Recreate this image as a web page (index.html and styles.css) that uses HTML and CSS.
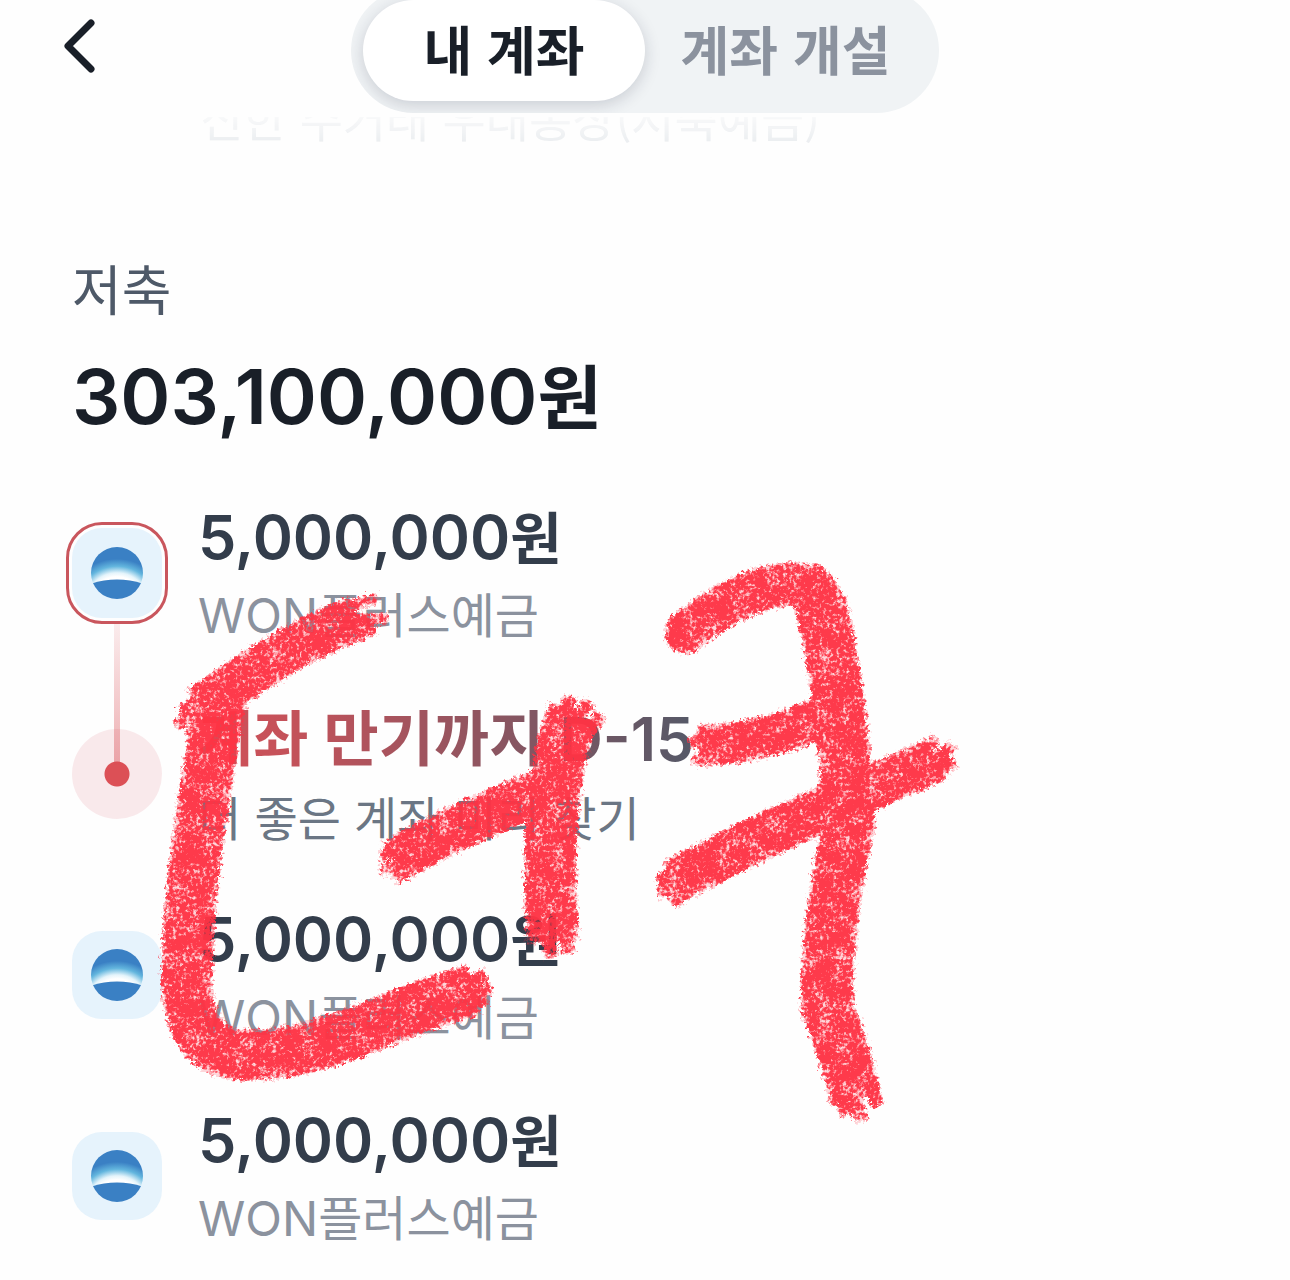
FILE: index.html
```html
<!DOCTYPE html>
<html lang="ko">
<head>
<meta charset="utf-8">
<meta name="viewport" content="width=device-width, initial-scale=1">
<title>내 계좌</title>
<link rel="stylesheet" href="styles.css">
</head>
<body>
<svg class="defs" width="0" height="0" aria-hidden="true">
  <defs>
    <radialGradient id="glow" gradientUnits="userSpaceOnUse" cx="27" cy="50" r="46" gradientTransform="translate(27 50) scale(1 .84) translate(-27 -50)">
      <stop offset=".5" stop-color="#fff"/>
      <stop offset=".6" stop-color="#e4f4fb"/>
      <stop offset=".77" stop-color="#63b6de"/>
      <stop offset=".96" stop-color="#3a80c4"/>
    </radialGradient>
    <clipPath id="disc"><circle cx="27" cy="27" r="26"/></clipPath>
    <symbol id="bank" viewBox="0 0 54 54">
      <g clip-path="url(#disc)">
        <rect width="54" height="54" fill="url(#glow)"/>
        <path d="M0 38Q27 29 54 38V54H0Z" fill="#3a80c4"/>
      </g>
    </symbol>
  </defs>
</svg>

<header class="topbar">
  <button class="back" type="button" aria-label="뒤로">
    <svg width="32" height="54" viewBox="0 0 32 54"><path d="M27 4L4 27L27 50" fill="none" stroke="#191f28" stroke-width="7" stroke-linecap="round" stroke-linejoin="round"/></svg>
  </button>
  <nav class="tabs">
    <button class="tab active" type="button">내 계좌</button>
    <button class="tab" type="button">계좌 개설</button>
  </nav>
</header>

<main class="page">
  <p class="passed">신한 주거래 우대통장(저축예금)</p>
  <h1 class="label">저축</h1>
  <p class="total">303,100,000<span class="won">원</span></p>
  <ul class="accounts">
    <li class="row linked">
      <span class="avatar ring"><svg width="54" height="54"><use href="#bank"/></svg></span>
      <div><p class="amount">5,000,000<span class="won">원</span></p><p class="name">WON플러스예금</p></div>
    </li>
    <li class="row">
      <span class="marker"></span>
      <div><p class="due"><span class="due-text">계좌 만기까지 D-15</span></p><p class="hint">더 좋은 계좌 미리 찾기</p></div>
    </li>
    <li class="row">
      <span class="avatar"><svg width="54" height="54"><use href="#bank"/></svg></span>
      <div><p class="amount">5,000,000<span class="won">원</span></p><p class="name">WON플러스예금</p></div>
    </li>
    <li class="row">
      <span class="avatar"><svg width="54" height="54"><use href="#bank"/></svg></span>
      <div><p class="amount">5,000,000<span class="won">원</span></p><p class="name">WON플러스예금</p></div>
    </li>
  </ul>
</main>

<svg class="crayon" width="1000" height="1180" viewBox="0 0 1000 1180" aria-hidden="true">
  <defs>
    <filter id="wax" filterUnits="userSpaceOnUse" x="0" y="500" width="1000" height="680" color-interpolation-filters="sRGB">
      <feTurbulence type="fractalNoise" baseFrequency=".3" numOctaves="3" seed="7" result="fine"/>
      <feTurbulence type="fractalNoise" baseFrequency=".06" numOctaves="2" seed="3" result="coarse"/>
      <feComposite in="fine" in2="coarse" operator="arithmetic" k1="0" k2=".62" k3=".38" k4="0" result="grain"/>
      <feDisplacementMap in="SourceGraphic" in2="fine" scale="12" xChannelSelector="R" yChannelSelector="G" result="rough"/>
      <feGaussianBlur stdDeviation="3" result="soft"/>
      <feComposite in="soft" in2="grain" operator="arithmetic" k1="0" k2="1.6" k3="5.5" k4="-3.2" result="mask"/>
      <feFlood flood-color="#ff3344"/>
      <feComposite in2="mask" operator="in" result="wax"/>
      <feFlood flood-color="#ff3344" flood-opacity=".2"/>
      <feComposite in2="rough" operator="in" result="tint"/>
      <feComposite in="wax" in2="rough" operator="in" result="strokes"/>
      <feMerge><feMergeNode in="tint"/><feMergeNode in="strokes"/></feMerge>
    </filter>
  </defs>
  <g filter="url(#wax)" opacity=".96" fill="none" stroke="#ff3344" stroke-linejoin="round">
    <path stroke-width="46" d="M358 618C310 634 244 676 200 708"/>
    <path stroke-width="12" d="M350 606L378 598M350 620L388 618M345 632L376 630M212 688L180 712M214 704L176 726M216 712L188 736"/>
    <path stroke-width="52" d="M222 694C206 780 187 890 187 980C189 1037 210 1056 252 1055C330 1053 390 1012 474 990"/>
    <path stroke-width="13" d="M464 984L486 974M470 994L492 988M470 1004L488 998"/>
    <path stroke-width="46" d="M394 862C440 832 500 810 560 782"/>
    <path stroke-width="12" d="M402 850L380 856M402 862L380 872M408 870L394 880"/>
    <path stroke-width="53" d="M574 712C550 770 547 860 553 942"/>
    <path stroke-width="14" d="M565 715L570 696M578 716L590 702M590 730L602 714M546 930L552 958M566 930L568 954"/>
    <path stroke-width="44" stroke-linecap="round" d="M686 632C720 604 765 580 806 585Q818 586 822 606"/>
    <path stroke-width="53" d="M820 600C834 660 845 740 849 824C836 880 826 940 827 1008Q842 1040 856 1100"/>
    <path stroke-width="14" d="M838 1080L846 1116M852 1090L862 1122M868 1080L878 1106"/>
    <path stroke-width="42" d="M698 746Q765 744 836 712"/>
    <path stroke-width="12" d="M702 738L690 744M704 756L692 762"/>
    <path stroke-width="46" d="M674 882C750 840 840 800 938 759"/>
    <path stroke-width="13" d="M678 870L658 882M680 884L658 894M686 892L672 904M922 754L936 738M934 762L954 744M936 772L956 762"/>
  </g>
</svg>
</body>
</html>
```
FILE: styles.css
```css
* { box-sizing: border-box; }

body {
  position: relative;
  margin: 0;
  background: #fefefe;
  color: #191f28;
  font-family: Inter, "Noto Sans CJK KR", sans-serif;
  overflow-x: hidden;
}

p, h1, ul { margin: 0; padding: 0; }

button {
  border: 0;
  padding: 0;
  background: none;
  font: inherit;
  color: inherit;
}

.defs { position: absolute; }

.topbar {
  position: relative;
  z-index: 1;
  display: grid;
  grid-template-columns: 1fr auto 1fr;
  align-items: center;
  height: 130px;
  margin-top: -13px;
  padding: 0 64px 4px;
  background: #fefefe;
}

.back { display: flex; justify-self: start; margin-bottom: 8px; }

.tabs {
  display: flex;
  align-items: center;
  height: 125px;
  padding: 0 12px;
  border-radius: 63px;
  background: #f0f3f5;
  overflow: hidden;
}

.tab {
  height: 101px;
  padding: 0 36px 4px;
  border-radius: 51px;
  color: #8b929e;
  font-family: "Noto Sans CJK KR", sans-serif;
  font-size: 53px;
  font-weight: 600;
  line-height: 96px;
  white-space: nowrap;
}

.tab.active {
  padding: 0 60px 4px;
  background: #fff;
  color: #191f28;
  box-shadow: 0 4px 16px rgba(30, 35, 60, 0.18);
}

.page { padding: 0 72px; }

.passed {
  height: 66px;
  margin-top: -35px;
  padding-left: 128px;
  color: #e8ebee;
  font-family: "Noto Sans CJK KR", sans-serif;
  font-size: 47px;
  line-height: 70px;
  white-space: nowrap;
  -webkit-mask-image: linear-gradient(rgba(0, 0, 0, 0.2) 50%, #000);
  mask-image: linear-gradient(rgba(0, 0, 0, 0.2) 50%, #000);
}

.label {
  margin-top: 104px;
  color: #4e5968;
  font-size: 54px;
  font-weight: 400;
  line-height: 80px;
}

.total {
  margin-top: 4px;
  font-size: 76px;
  font-weight: 600;
  line-height: 120px;
}

.total .won { font-size: 70px; }

.accounts { margin-top: 13px; list-style: none; }

.row {
  position: relative;
  display: grid;
  grid-template-columns: 90px 1fr;
  column-gap: 36px;
  align-items: center;
  height: 201px;
}

.avatar {
  display: grid;
  place-items: center;
  height: 88px;
  border-radius: 30px;
  background: #e6f3fc;
}

.ring {
  height: 90px;
  outline: 3px solid #c9565d;
  outline-offset: 3px;
}

.linked::after {
  content: "";
  position: absolute;
  top: 151px;
  left: 42px;
  z-index: 1;
  width: 6px;
  height: 142px;
  background: linear-gradient(rgba(218, 78, 85, 0.1), rgba(218, 78, 85, 0.45));
}

.marker {
  height: 90px;
  border-radius: 50%;
  background: radial-gradient(circle, #dc5056 12px, #f9e9eb 13px);
}

.amount {
  color: #333d4b;
  font-size: 61px;
  font-weight: 600;
  line-height: 84px;
}

.amount .won { font-size: 56px; }

.name, .hint {
  color: #8b929e;
  font-size: 48px;
  line-height: 70px;
}

.hint {
  color: #6b7684;
  font-family: "Noto Sans CJK KR", sans-serif;
  font-size: 47px;
}

.due {
  font-size: 60px;
  font-weight: 600;
  line-height: 84px;
}

.due-text {
  background: linear-gradient(90deg, #d25058, #c2525a 100px, #4e5968 520px);
  -webkit-background-clip: text;
  background-clip: text;
  color: transparent;
}

.crayon {
  position: absolute;
  top: 0;
  left: 0;
  pointer-events: none;
}
```
